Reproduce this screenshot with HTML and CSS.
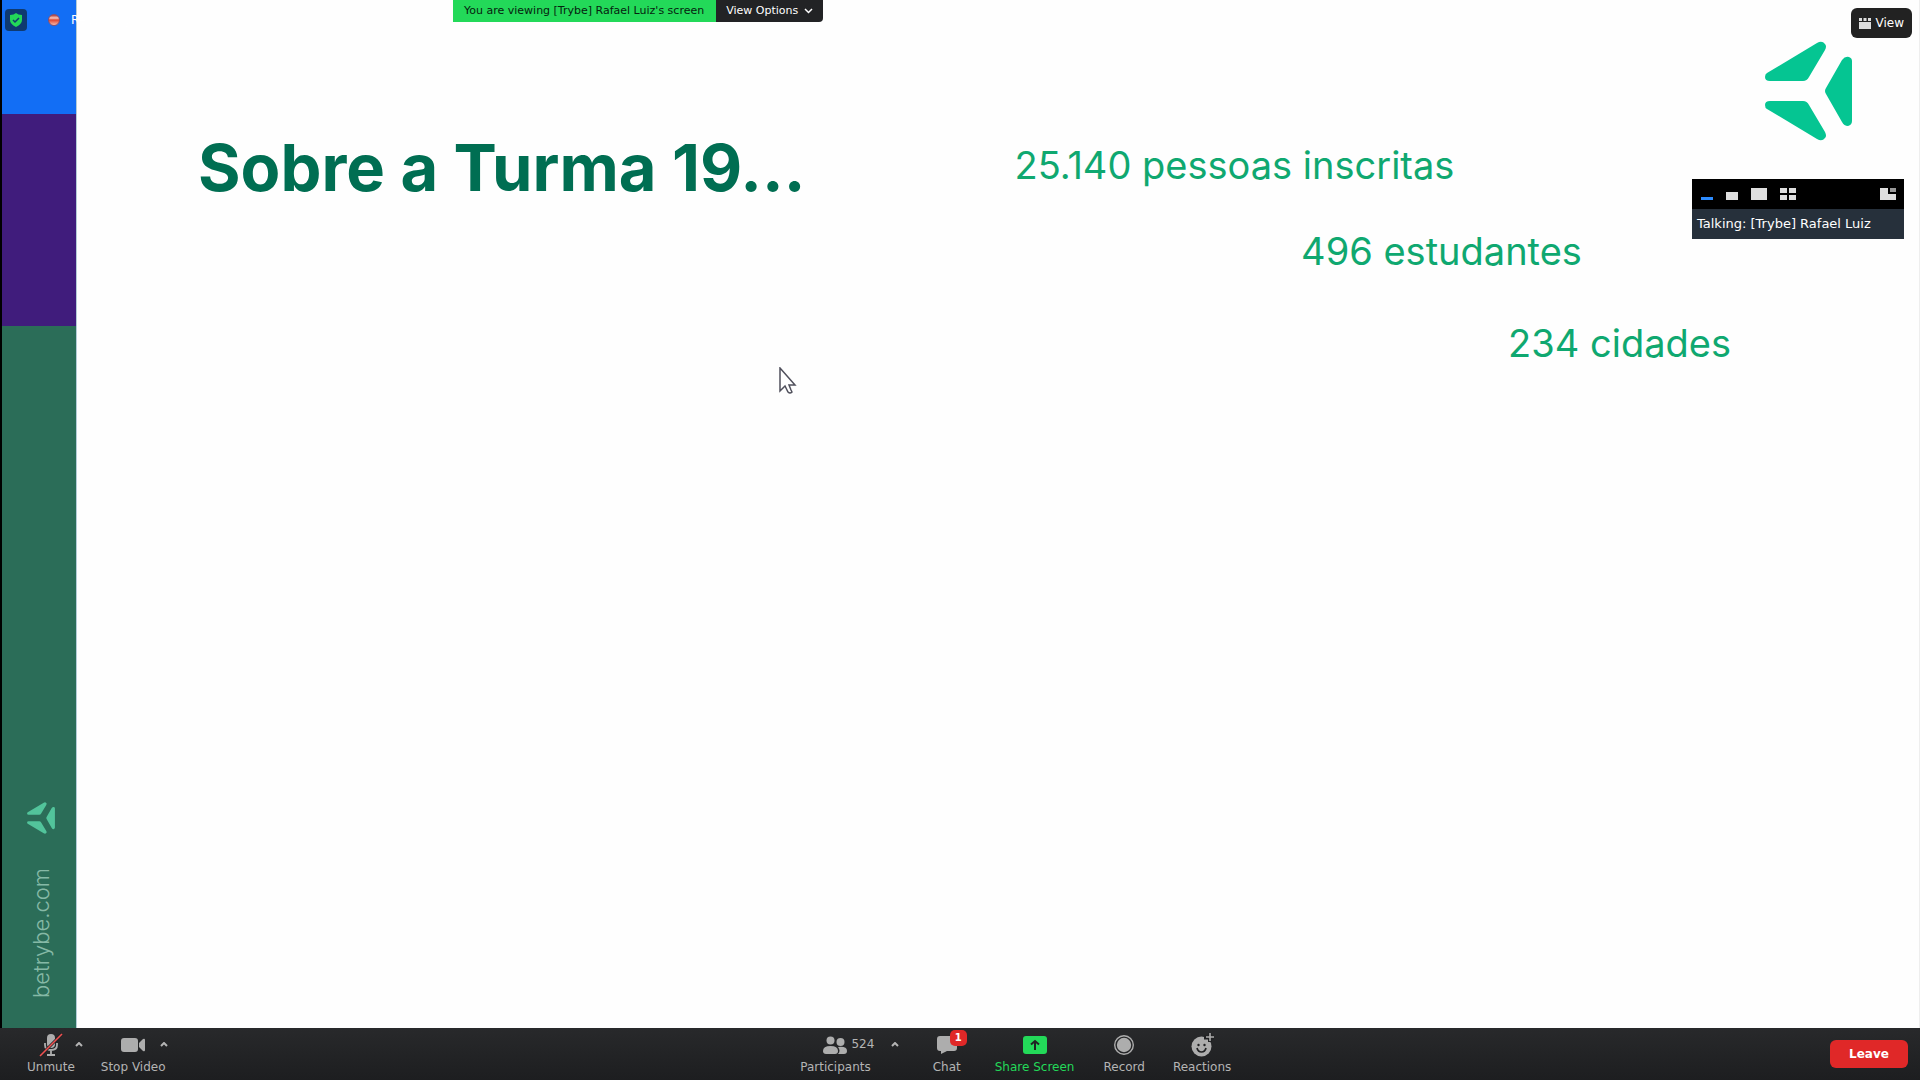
FILE: index.html
```html
<!DOCTYPE html>
<html lang="pt-BR">
<head>
<meta charset="utf-8">
<title>Zoom Meeting</title>
<link rel="stylesheet" href="styles.css">
</head>
<body>
<svg class="defs" aria-hidden="true">
  <symbol id="trybe" viewBox="0 0 87 100">
    <path d="M2 32 52 2Q57-1 60 3Q62 5 60 9L44 36Q42 40 38 40H5Q0 40 0 36Q0 33 2 32Z"/>
    <path d="M2 68 52 98Q57 101 60 97Q62 95 60 91L44 64Q42 60 38 60H5Q0 60 0 64Q0 67 2 68Z"/>
    <path d="M61 47 77 19Q80 15 84 16Q87 17 87 20V80Q87 84 83 85Q79 85 77 81L61 53Q59 50 61 47Z"/>
  </symbol>
  <symbol id="up" viewBox="0 0 8 5"><path d="M1 4 4 1 7 4" fill="none" stroke="currentColor" stroke-width="2"/></symbol>
</svg>

<main class="share">
  <aside class="brand">
    <div class="band blue"></div>
    <div class="band purple"></div>
    <div class="band green">
      <svg class="brand-mark"><use href="#trybe"/></svg>
      <span class="brand-url">betrybe.com</span>
    </div>
  </aside>
  <section class="slide">
    <h1>Sobre a Turma 19...</h1>
    <ul class="facts">
      <li>25.140 pessoas inscritas</li>
      <li class="fact-middle">496 estudantes</li>
      <li class="fact-end">234 cidades</li>
    </ul>
  </section>

  <svg class="logo"><use href="#trybe"/></svg>

  <div class="status">
    <button class="shield" aria-label="Meeting information">
      <svg width="14" height="14" viewBox="0 0 14 14"><path d="M7 0Q9 2 13 2V7Q13 11 7 14Q1 11 1 7V2Q5 2 7 0Z" fill="#23d959"/><path d="M4 7 6 9 10 5" fill="none" stroke="#0f3a70" stroke-width="1.5"/></svg>
    </button>
    <span class="rec-dot"></span>
    <span>Recording</span>
  </div>

  <div class="banner">
    <span class="viewing">You are viewing [Trybe] Rafael Luiz's screen</span>
    <button class="options">View Options
      <svg width="9" height="6" viewBox="0 0 9 6"><path d="M1 1 4.500 4.500 8 1" fill="none" stroke="#fff" stroke-width="1.500"/></svg>
    </button>
  </div>

  <button class="view">
    <svg width="12" height="11" viewBox="0 0 12 11" fill="#ddd"><path d="M0 0H3V3H0ZM4.500 0H7.500V3H4.500ZM9 0H12V3H9ZM0 4H12V11H0Z"/></svg>
    View
  </button>

  <div class="speaker">
    <div class="layouts">
      <button aria-label="Minimize"><svg width="12" height="12"><path d="M0 9H12V12H0Z" fill="#2d8cff"/></svg></button>
      <button aria-label="Small"><svg width="12" height="12"><path d="M0 4H12V12H0Z"/></svg></button>
      <button aria-label="Large"><svg width="16" height="12"><path d="M0 0H16V12H0Z"/></svg></button>
      <button aria-label="Gallery"><svg width="16" height="12"><path d="M0 0H7V5H0ZM9 0H16V5H9ZM0 7H7V12H0ZM9 7H16V12H9Z"/></svg></button>
      <button class="pip" aria-label="Swap"><svg width="16" height="12"><path d="M0 0H8V6H16V12H0Z"/><path d="M10 0H16V4H10Z" fill="#999"/></svg></button>
    </div>
    <div class="talking">Talking: [Trybe] Rafael Luiz</div>
  </div>

  <svg class="cursor" width="18" height="28" viewBox="0 0 18 28"><path d="M1 1V24L6 19 9 25Q11 27 13 25L12 23 10 18H16Z" fill="#fff" stroke="#50505c" stroke-width="1.500"/></svg>
</main>

<footer class="toolbar">
  <div class="group audio-video">
    <button class="tool">
      <span class="icon"><svg width="24" height="24" viewBox="0 0 24 24"><rect x="8" y="1" width="8" height="14" rx="4" fill="#adadad"/><path d="M6 10V12Q6 17 12 17Q18 17 18 12V10M12 17V22M8 22H16" fill="none" stroke="#adadad" stroke-width="1.800"/><path d="M1 23 23 1" stroke="#202123" stroke-width="3"/><path d="M1 23 23 1" stroke="#f05050" stroke-width="1.600"/></svg></span>
      Unmute
    </button>
    <button class="caret" aria-label="Audio options"><svg><use href="#up"/></svg></button>
    <button class="tool">
      <span class="icon"><svg width="24" height="24" viewBox="0 0 24 24" fill="#adadad"><rect x="0" y="5" width="17" height="14" rx="3"/><path d="M18 10 22 6Q24 5 24 7V17Q24 19 22 18L18 14Z"/></svg></span>
      Stop Video
    </button>
    <button class="caret caret-video" aria-label="Video options"><svg><use href="#up"/></svg></button>
  </div>

  <div class="group center">
    <button class="tool">
      <span class="icon"><svg width="24" height="24" viewBox="0 0 24 24" fill="#adadad"><circle cx="7.500" cy="7.500" r="4"/><circle cx="17.500" cy="9" r="4"/><path d="M0 18Q0 13 7.500 13Q15 13 15 18Q15 21 12 21H3Q0 21 0 18Z"/><path d="M15 14Q24 13 24 18Q24 21 21 21H15Q18 18 15 14Z"/></svg><span class="count">524</span></span>
      Participants
    </button>
    <button class="caret" aria-label="Participant options"><svg><use href="#up"/></svg></button>
    <button class="tool chat">
      <span class="icon"><svg width="20" height="24" viewBox="0 0 20 24"><path d="M3 3H17Q20 3 20 6V15Q20 18 17 18H10L4 21V18H3Q0 18 0 15V6Q0 3 3 3Z" fill="#adadad"/></svg><span class="badge">1</span></span>
      Chat
    </button>
    <button class="tool share-screen">
      <span class="icon"><svg width="24" height="24" viewBox="0 0 24 24"><rect y="3" width="24" height="18" rx="3" fill="#23d959"/><path d="M12 17V8M8 11.500 12 8 16 11.500" fill="none" stroke="#202123" stroke-width="2"/></svg></span>
      Share Screen
    </button>
    <button class="tool record">
      <span class="icon"><svg width="24" height="24" viewBox="0 0 24 24"><circle cx="12" cy="12" r="9.300" fill="none" stroke="#adadad" stroke-width="1.400"/><circle cx="12" cy="12" r="7.200" fill="#adadad"/></svg></span>
      Record
    </button>
    <button class="tool">
      <span class="icon"><svg width="24" height="24" viewBox="0 0 24 24"><circle cx="11.500" cy="13.500" r="10" fill="#adadad"/><path d="M14 4.500H24M20 0V9" stroke="#202123" stroke-width="4"/><path d="M16 4H24M20 0V8" stroke="#adadad" stroke-width="1.600"/><circle cx="8.500" cy="12" r="1.200" fill="#202123"/><circle cx="14.500" cy="12" r="1.200" fill="#202123"/><path d="M7 15Q8 19 11.500 19Q15 19 16 15" fill="none" stroke="#202123" stroke-width="1.700"/></svg></span>
      Reactions
    </button>
  </div>

  <button class="leave">Leave</button>
</footer>
</body>
</html>
```
FILE: styles.css
```css
* { box-sizing: border-box; }

body {
  margin: 0;
  min-height: 100vh;
  display: flex;
  flex-direction: column;
  background: #000;
  font: 12px/16px "DejaVu Sans", sans-serif;
}

button {
  margin: 0;
  padding: 0;
  border: 0;
  background: none;
  color: inherit;
  font: inherit;
}

svg { display: block; }
.defs { position: absolute; width: 0; height: 0; }

.share {
  position: relative;
  flex: 1;
  display: flex;
  padding-left: 2px;
}

/* Slide */
.brand {
  width: 75px;
  display: flex;
  flex-direction: column;
  border-right: 1px solid #b4cdd8;
}
.blue { height: 114px; background: #126ef5; }
.purple { height: 212px; background: #401c7c; }
.green {
  flex: 1;
  display: flex;
  flex-direction: column;
  align-items: center;
  justify-content: flex-end;
  gap: 34px;
  padding: 0 0 30px 4px;
  background: #2b6d58;
}
.brand-mark { width: 28px; height: 32px; fill: #52c49b; }
.brand-url {
  writing-mode: vertical-rl;
  transform: rotate(180deg);
  font: 300 22px/28px Inter, sans-serif;
  color: #86b9a6;
}

.slide {
  flex: 1;
  display: grid;
  grid-template-columns: 53% 1fr;
  align-content: start;
  padding: 128px 188px 0 121px;
  background: #fefefe;
  border-right: 1px solid #eee;
}
h1 {
  margin: 0;
  font: 700 65px/80px Inter, sans-serif;
  color: #006e52;
}
.facts {
  margin: 0;
  padding: 13px 0 0 4px;
  display: flex;
  flex-direction: column;
  list-style: none;
  font: 400 38px/48px Inter, sans-serif;
  color: #0fa870;
}
.fact-middle { padding: 38px 0 44px 40%; }
.fact-end { text-align: right; }

/* Overlays */
.logo {
  position: absolute;
  top: 41px;
  right: 68px;
  width: 87px;
  height: 100px;
  fill: #05c592;
}

.status {
  position: absolute;
  top: 9px;
  left: 5px;
  display: flex;
  align-items: center;
  color: #fff;
}
.shield {
  width: 22px;
  height: 22px;
  margin-right: 21px;
  display: grid;
  place-items: center;
  border-radius: 4px;
  background: #0f3a70;
}
.rec-dot {
  width: 12px;
  height: 12px;
  margin-right: 11px;
  border: 1px solid #8a4f6c;
  border-radius: 50%;
  background: linear-gradient(#b33a30, #f7c9c0 30%, #e0442f 50%, #f7b9a8);
}

.banner {
  position: absolute;
  top: 0;
  left: 453px;
  display: flex;
  font-size: 11px;
  line-height: 22px;
}
.viewing { padding: 0 12px 0 11px; background: #23d959; color: #06220f; }
.options {
  display: flex;
  align-items: center;
  gap: 6px;
  padding: 0 10px;
  border-radius: 0 0 4px 0;
  background: #222325;
  color: #fff;
}

.view {
  position: absolute;
  top: 8px;
  right: 8px;
  display: flex;
  align-items: center;
  gap: 5px;
  height: 30px;
  padding: 0 8px;
  border-radius: 6px;
  background: #222;
  color: #fff;
}

.speaker {
  position: absolute;
  top: 179px;
  right: 16px;
  width: 212px;
}
.layouts {
  display: flex;
  align-items: center;
  gap: 13px;
  height: 30px;
  padding: 0 8px 0 9px;
  background: #000;
  fill: #dedede;
}
.pip { margin-left: auto; }
.talking {
  padding: 0 5px;
  background: #26303b;
  color: #fff;
  font-size: 13px;
  line-height: 30px;
}

.cursor { position: absolute; top: 367px; left: 779px; }

/* Toolbar */
.toolbar {
  display: flex;
  align-items: center;
  justify-content: space-between;
  height: 52px;
  padding: 0 12px 0 27px;
  background: linear-gradient(#28292b, #1d1e20);
  color: #b4b4b4;
}
.group { display: flex; align-items: flex-start; }
.audio-video { padding-right: 20px; }
.tool {
  display: flex;
  flex-direction: column;
  align-items: center;
  gap: 2px;
}
.icon { position: relative; display: block; }
.caret { width: 8px; padding-top: 9px; }
.caret svg { width: 8px; height: 5px; }
.audio-video .caret { margin-right: 18px; }
.audio-video .caret-video { margin: 0 14px 0 -6px; }
.count { position: absolute; top: 3px; left: 28px; }
.center .caret { margin: 0 34px 0 20px; }
.badge {
  position: absolute;
  top: -3px;
  left: 13px;
  width: 17px;
  border-radius: 5px;
  background: #e02828;
  color: #fff;
  font-size: 10px;
  font-weight: 700;
  text-align: center;
}
.chat { margin-right: 34px; }
.share-screen { margin-right: 29px; color: #23d959; }
.record { margin-right: 28px; }
.leave {
  width: 78px;
  height: 28px;
  border-radius: 6px;
  background: #e02828;
  color: #fff;
  font-weight: 700;
}
```
